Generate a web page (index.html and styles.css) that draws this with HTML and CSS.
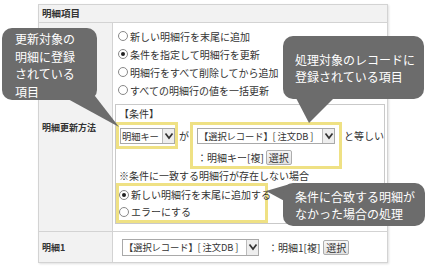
FILE: index.html
```html
<!DOCTYPE html>
<html lang="ja">
<head>
<meta charset="utf-8">
<link rel="stylesheet" href="styles.css">
</head>
<body>
<div class="page">
  <div class="tbl">
    <div class="hdr">明細項目</div>

    <div class="lbl lbl-tall">明細更新方法</div>
    <div class="cell cell-tall">
      <div class="opts">
        <div class="opt"><span class="radio"></span>新しい明細行を末尾に追加</div>
        <div class="opt"><span class="radio on"></span>条件を指定して明細行を更新</div>
        <div class="opt"><span class="radio"></span>明細行をすべて削除してから追加</div>
        <div class="opt"><span class="radio"></span>すべての明細行の値を一括更新</div>
      </div>
      <div class="cond">
        <div class="cond-title">【条件】</div>
        <div class="cond-row">
          <div class="hl hl1">
            <span class="sel sel-key"><span class="txt">明細キー</span><span class="arr"><svg width="10" height="14" viewBox="0 0 10 14"><path d="M1.5 4.5 L5 9 L8.5 4.5" fill="none" stroke="#333" stroke-width="1.7"/></svg></span></span>
          </div>
          <span class="ga">が</span>
          <div class="hl hl2">
            <span class="sel sel-rec"><span class="txt">【選択レコード】[ 注文DB ]</span><span class="arr"><svg width="10" height="14" viewBox="0 0 10 14"><path d="M1.5 4.5 L5 9 L8.5 4.5" fill="none" stroke="#333" stroke-width="1.7"/></svg></span></span>
            <div class="sub"><span class="subtxt">：明細キー[複]</span><span class="btn">選択</span></div>
          </div>
          <span class="eq">と等しい</span>
        </div>
        <div class="note">※条件に一致する明細行が存在しない場合</div>
        <div class="hl hl3">
          <div class="opt opt-s"><span class="radio on"></span>新しい明細行を末尾に追加する</div>
          <div class="opt opt-s"><span class="radio"></span>エラーにする</div>
        </div>
      </div>
    </div>

    <div class="lbl lbl-last">明細1</div>
    <div class="cell cell-last">
      <span class="sel sel-rec2"><span class="txt">【選択レコード】[ 注文DB ]</span><span class="arr"><svg width="10" height="14" viewBox="0 0 10 14"><path d="M1.5 4.5 L5 9 L8.5 4.5" fill="none" stroke="#333" stroke-width="1.7"/></svg></span></span>
      <span class="subtxt sub-last">：明細1[複]</span>
      <span class="btn">選択</span>
    </div>
  </div>

  <svg class="tails" width="426" height="268" viewBox="0 0 426 268">
    <polygon points="66,98 95,96 119,127" fill="#6c6c6c"/>
    <polygon points="296,98 334,98 309,123" fill="#6c6c6c"/>
    <polygon points="266,191 290,184 290,204" fill="#6c6c6c"/>
  </svg>

  <div class="bubble b1">更新対象の<br>明細に登録<br>されている<br>項目</div>
  <div class="bubble b2">処理対象のレコードに<br>登録されている項目</div>
  <div class="bubble b3">条件に合致する明細が<br>なかった場合の処理</div>
</div>
</body>
</html>
```

FILE: styles.css
```css
* { box-sizing: border-box; }

body {
  margin: 0;
  background: #fff;
  font-family: "Noto Sans CJK JP", "Noto Sans", sans-serif;
  font-size: 10px;
  color: #333;
}

.page {
  position: relative;
  width: 426px;
  height: 268px;
  overflow: hidden;
  padding: 4px 0 0 38px;
}

.tbl {
  width: 350px;
  border: 1px solid #d3d3d3;
  box-shadow: 1px 1px 2px rgba(0, 0, 0, 0.12);
  display: grid;
  grid-template-columns: 74px 1fr;
}

.hdr {
  grid-column: 1 / 3;
  height: 18px;
  background: #f2f2f2;
  border-bottom: 1px solid #d3d3d3;
  font-weight: bold;
  font-size: 9.5px;
  padding-left: 3px;
  line-height: 17px;
}

.lbl {
  background: #f2f2f2;
  border-right: 1px solid #d3d3d3;
  font-weight: bold;
  font-size: 9px;
  padding-left: 3px;
  display: flex;
  align-items: center;
}

.lbl-tall, .cell-tall {
  height: 209px;
  border-bottom: 1px solid #d3d3d3;
}

.lbl-last, .cell-last {
  height: 30px;
}

.cell-tall {
  padding: 4px 2px 0 2px;
}

.opt {
  display: flex;
  align-items: center;
  height: 18px;
  white-space: nowrap;
}

.radio {
  position: relative;
  width: 10px;
  height: 10px;
  border: 1px solid #888;
  border-radius: 50%;
  background: #fff;
  margin: 0 2px 0 3px;
  flex: none;
}

.radio.on::after {
  content: "";
  position: absolute;
  left: 2px;
  top: 2px;
  width: 4px;
  height: 4px;
  border-radius: 50%;
  background: #222;
}

.cond {
  margin-top: 5px;
  border: 1px solid #c9c9c9;
  height: 120px;
}

.cond-title {
  line-height: 16px;
  padding: 1px 0 0 3px;
}

.cond-row {
  display: flex;
  align-items: flex-start;
}

.hl {
  border: 3px solid #efe184;
}

.hl1 {
  width: 62px;
  padding: 3px 0 2px 1px;
}

.sel {
  display: flex;
  height: 16px;
  border: 1px solid #a9a9a9;
  background: #fff;
  align-items: center;
  font-size: 9.3px;
}

.sel .txt {
  flex: 1;
  padding-left: 1px;
  white-space: nowrap;
  overflow: hidden;
  line-height: 14px;
  letter-spacing: -0.1px;
}

.sel .arr {
  width: 12px;
  height: 100%;
  border-left: 1px solid #bbb;
  background: #eee;
  display: flex;
  align-items: center;
  justify-content: center;
  flex: none;
}

.sel-key { width: 55px; }

.ga {
  width: 12px;
  text-align: center;
  line-height: 16px;
  margin-top: 6px;
}

.hl2 {
  width: 152px;
  padding: 3px 0 0 4px;
}

.sel-rec { width: 138px; }

.sub {
  margin-top: 5px;
  height: 16px;
  display: flex;
  align-items: center;
  margin-bottom: 1px;
}

.subtxt {
  white-space: nowrap;
  margin-right: 2px;
}

.btn {
  height: 15px;
  padding: 0 2px;
  border: 1px solid #adadad;
  border-radius: 2px;
  background: linear-gradient(#f7f7f7, #e1e1e1);
  line-height: 13px;
  font-size: 10px;
  white-space: nowrap;
}

.eq {
  margin: 6px 0 0 2px;
  line-height: 16px;
  white-space: nowrap;
}

.note {
  line-height: 14px;
  padding-left: 3px;
  white-space: nowrap;
}

.hl3 {
  width: 152px;
  padding: 0;
}

.opt-s {
  height: 17px;
}

.opt-s .radio {
  margin-left: 0;
}

.cell-last {
  display: flex;
  align-items: center;
  padding-left: 9px;
}

.sel-rec2 {
  width: 137px;
  height: 17px;
}

.sub-last {
  margin: 0 3px 0 9px;
}

.tails {
  position: absolute;
  left: 0;
  top: 0;
  pointer-events: none;
}

.bubble {
  position: absolute;
  background: #6c6c6c;
  color: #fff;
  font-size: 12px;
  border-radius: 10px;
  white-space: nowrap;
}

.b1 {
  left: 2px;
  top: 28px;
  width: 95px;
  height: 72px;
  padding: 2px 0 0 13px;
  line-height: 17.5px;
}

.b2 {
  left: 283px;
  top: 36px;
  width: 141px;
  height: 63px;
  padding-left: 12px;
  line-height: 17px;
  display: flex;
  align-items: center;
}

.b3 {
  left: 283px;
  top: 183px;
  width: 142px;
  height: 43px;
  padding-left: 12px;
  line-height: 17px;
  display: flex;
  align-items: center;
}
```
